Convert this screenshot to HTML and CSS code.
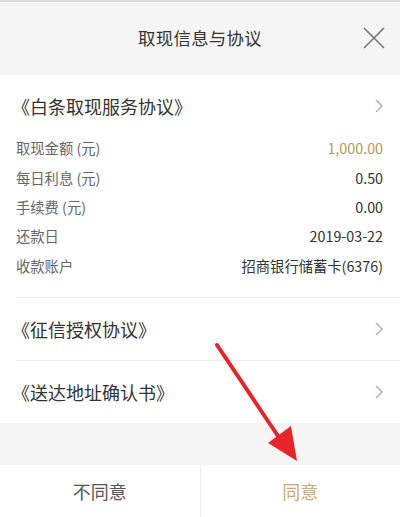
FILE: index.html
```html
<!DOCTYPE html>
<html lang="zh">
<head>
<meta charset="utf-8">
<link rel="stylesheet" href="styles.css">
</head>
<body>
<div class="page">
  <div class="topline"></div>
  <header class="header">
    <div class="title">取现信息与协议</div>
    <svg class="close" width="24" height="24" viewBox="0 0 24 24"><path d="M2 2L22 22M22 2L2 22" stroke="#777" stroke-width="1.6" fill="none"/></svg>
  </header>
  <main class="content">
    <div class="section">
      <div class="link-row first"><span>《白条取现服务协议》</span><svg class="chev" width="8" height="14" viewBox="0 0 8 14"><path d="M1 1L7 7L1 13" stroke="#aaa" stroke-width="1.3" fill="none"/></svg></div>
      <div class="rows">
        <div class="row"><span class="label">取现金额 (元)</span><span class="value gold">1,000.00</span></div>
        <div class="row"><span class="label">每日利息 (元)</span><span class="value">0.50</span></div>
        <div class="row"><span class="label">手续费 (元)</span><span class="value">0.00</span></div>
        <div class="row"><span class="label">还款日</span><span class="value">2019-03-22</span></div>
        <div class="row"><span class="label">收款账户</span><span class="value">招商银行储蓄卡(6376)</span></div>
      </div>
    </div>
    <div class="section"><div class="link-row"><span>《征信授权协议》</span><svg class="chev" width="8" height="14" viewBox="0 0 8 14"><path d="M1 1L7 7L1 13" stroke="#aaa" stroke-width="1.3" fill="none"/></svg></div></div>
    <div class="section"><div class="link-row"><span>《送达地址确认书》</span><svg class="chev" width="8" height="14" viewBox="0 0 8 14"><path d="M1 1L7 7L1 13" stroke="#aaa" stroke-width="1.3" fill="none"/></svg></div></div>
  </main>
  <div class="spacer"></div>
  <footer class="footer">
    <div class="btn">不同意</div>
    <div class="btn agree">同意</div>
  </footer>
  <svg class="arrow" width="400" height="517" viewBox="0 0 400 517"><path d="M217 345L284 445" stroke="#e8232a" stroke-width="4" stroke-linecap="round" fill="none"/><path d="M297 461L268 443L291 426Z" fill="#e8232a"/></svg>
</div>
</body>
</html>
```
FILE: styles.css
```css
* { box-sizing: border-box; }
html, body { margin: 0; padding: 0; }
body { font-family: "Noto Sans CJK SC", "Noto Sans", sans-serif; background: #f5f5f5; }
.page { position: relative; width: 400px; height: 517px; display: flex; flex-direction: column; background: #f5f5f5; overflow: hidden; }
.topline { height: 2px; background: #dcdcdc; }
.header { height: 73px; display: flex; align-items: center; justify-content: center; position: relative; }
.title { font-size: 17.4px; color: #333; letter-spacing: 0.3px; margin-top: -2px; }
.close { position: absolute; right: 14px; top: 24px; }
.content { background: #fff; padding-left: 16px; height: 348px; }
.section { border-bottom: 1px solid #eee; padding-right: 17px; }
.section:last-child { border-bottom: none; }
.link-row { height: 62px; display: flex; align-items: center; justify-content: space-between; font-size: 18px; color: #333; margin-left: -4px; }
.rows { padding: 0 0 17px; margin-top: -4px; }
.row { height: 29.4px; display: flex; align-items: center; justify-content: space-between; font-size: 14.3px; }
.label { color: #666; }
.value { color: #333; }
.value.gold { color: #b8965a; }
.spacer { height: 42px; }
.footer { flex: 1; background: #fff; display: flex; }
.btn { flex: 1; display: flex; align-items: center; justify-content: center; font-size: 18px; color: #555; }
.btn.agree { border-left: 1px solid #eee; color: #c9ab7a; }
.arrow { position: absolute; left: 0; top: 0; pointer-events: none; }
```
